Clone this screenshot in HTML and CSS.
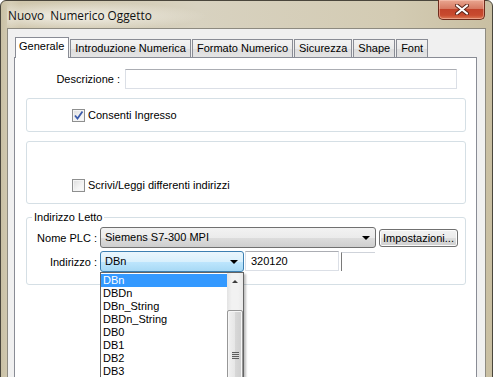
FILE: index.html
```html
<!DOCTYPE html>
<html lang="it">
<head>
  <meta charset="UTF-8" />
  <title>Nuovo Numerico Oggetto</title>
  <link rel="stylesheet" href="styles.css">
</head>
<body>
  <div class="window">
    <div class="titlebar">
      <span class="title">Nuovo&nbsp; Numerico Oggetto</span>
      <button class="close-btn" type="button">
        <svg width="14" height="11" viewBox="0 0 14 11">
          <path d="M2 1.5 L12 9.5 M12 1.5 L2 9.5" stroke="#5a2418" stroke-width="4" stroke-linecap="round"/>
          <path d="M2 1.5 L12 9.5 M12 1.5 L2 9.5" stroke="#fff" stroke-width="2.2" stroke-linecap="round"/>
        </svg>
      </button>
    </div>

    <div class="client">
      <div class="tabs">
        <div class="tab active">Generale</div>
        <div class="tab">Introduzione Numerica</div>
        <div class="tab">Formato Numerico</div>
        <div class="tab">Sicurezza</div>
        <div class="tab">Shape</div>
        <div class="tab">Font</div>
      </div>

      <div class="panel">
        <div class="desc-row">
          <span class="lbl desc-lbl">Descrizione :</span>
          <div class="textbox desc-box"></div>
        </div>

        <div class="group group-one">
          <div class="check">
            <span class="checkbox">
              <svg width="11" height="11" viewBox="0 0 11 11">
                <path d="M2 5.5 L4.5 8.5 L9.5 1.5" fill="none" stroke="#3b5bab" stroke-width="1.8"/>
              </svg>
            </span>
            Consenti Ingresso
          </div>
        </div>

        <div class="group group-two">
          <div class="check">
            <span class="checkbox"></span>
            Scrivi/Leggi differenti indirizzi
          </div>
        </div>

        <fieldset class="group group-three">
          <legend>Indirizzo Letto</legend>
          <div class="field-row">
            <span class="lbl field-lbl">Nome PLC :</span>
            <div class="combo plc-combo">Siemens S7-300 MPI<span class="arrow"></span></div>
            <button class="btn" type="button">Impostazioni...</button>
          </div>
          <div class="field-row">
            <span class="lbl field-lbl">Indirizzo :</span>
            <div class="combo-wrap">
              <div class="combo addr-combo hot">DBn<span class="arrow"></span></div>
              <div class="droplist">
                <ul class="items">
                  <li class="selected">DBn</li>
                  <li>DBDn</li>
                  <li>DBn_String</li>
                  <li>DBDn_String</li>
                  <li>DB0</li>
                  <li>DB1</li>
                  <li>DB2</li>
                  <li>DB3</li>
                </ul>
                <div class="scrollbar">
                  <div class="scroll-up"><span class="up-arrow"></span></div>
                  <div class="thumb">
                    <span class="grip"></span>
                  </div>
                </div>
              </div>
            </div>
            <div class="textbox num-box">320120</div>
            <div class="stub-box"></div>
          </div>
        </fieldset>
      </div>
    </div>
  </div>
</body>
</html>
```

FILE: styles.css
```css
* {
  box-sizing: border-box;
}

body {
  margin: 0;
  width: 493px;
  height: 377px;
  overflow: hidden;
  background: #fff;
  font-family: "Liberation Sans", Arial, sans-serif;
  font-size: 11px;
  color: #000;
}

.window {
  width: 493px;
  height: 420px;
  border: 1px solid #4a463c;
  border-radius: 6px 6px 0 0;
  padding: 0 6px;
  background: linear-gradient(to right, #c9c0a4, #d6ceb7 2%, #cfc6ac 4%, #d8d2c0 40%, #d3cbb3 80%, #c9bfa2);
  display: flex;
  flex-direction: column;
}

.titlebar {
  height: 27px;
  display: flex;
  align-items: flex-start;
  justify-content: space-between;
  background: radial-gradient(ellipse 130px 14px at 70px 15px, rgba(245, 243, 236, 0.9), rgba(245, 243, 236, 0));
}

.title {
  font-family: "Open Sans", "Liberation Sans", sans-serif;
  font-size: 11.8px;
  margin-top: 6px;
  margin-left: 1px;
  color: #111;
}

.close-btn {
  width: 47px;
  height: 20px;
  margin-top: -1px;
  margin-right: 1px;
  border: 1px solid #6e2b1c;
  border-top: none;
  border-radius: 0 0 5px 5px;
  background: linear-gradient(#e9a690, #d77a62 45%, #c2432a 50%, #c84a2e 80%, #dc7a55);
  box-shadow: inset 0 0 0 1px rgba(255, 210, 195, 0.45);
  display: flex;
  align-items: center;
  justify-content: center;
  padding: 0;
}

.client {
  flex: 1;
  border: 1px solid #8d8a80;
  border-bottom: none;
  background: #f0f0f0;
  padding: 8px 8px 0 6px;
  display: flex;
  flex-direction: column;
}

.tabs {
  display: flex;
  align-items: flex-end;
  height: 20px;
  padding-left: 1px;
  position: relative;
  z-index: 1;
}

.tab {
  height: 18px;
  line-height: 17px;
  padding: 0 4px;
  border: 1px solid #898c95;
  border-bottom: none;
  margin-right: 1px;
  background: linear-gradient(#f3f3f3, #ebebeb 50%, #dddddd 51%, #e4e4e4);
  white-space: nowrap;
}

.tab.active {
  height: 21px;
  margin-bottom: -1px;
  line-height: 17px;
  padding: 0 4px 0 3px;
  background: #fff;
}

.panel {
  flex: 1;
  background: #fff;
  border: 1px solid #898c95;
  border-bottom: none;
  padding-top: 11px;
}

.lbl {
  text-align: right;
  white-space: nowrap;
}

.desc-row {
  display: flex;
  align-items: center;
}

.desc-lbl {
  width: 105px;
  margin-right: 5px;
}

.textbox {
  height: 20px;
  border: 1px solid #dbdfe6;
  border-top-color: #abadb3;
  background: #fff;
  padding: 0 5px;
  line-height: 18px;
}

.desc-box {
  width: 332px;
}

.group {
  margin: 9px 10px 0 11px;
  border: 1px solid #d5dfe5;
  border-radius: 3px;
}

.group-one {
  height: 34px;
  padding: 10px 0 0 45px;
}

.group-two {
  height: 63px;
  margin-top: 9px;
  padding: 37px 0 0 45px;
}

.check {
  display: flex;
  align-items: center;
  gap: 3px;
  line-height: 13px;
}

.checkbox {
  width: 13px;
  height: 13px;
  border: 1px solid #8e8f8f;
  background: linear-gradient(135deg, #dcdcdc, #f4f4f4 60%, #fbfbfb);
  box-shadow: inset 0 0 0 1px #f4f4f4;
  display: flex;
  align-items: center;
  justify-content: center;
}

.group-three {
  margin-top: 7px;
  padding: 3px 0 12px 5px;
  min-width: 0;
}

.group-three legend {
  padding: 0 2px;
  line-height: 13px;
}

.field-row {
  display: flex;
  align-items: center;
  margin-bottom: 3px;
}

.field-row:last-child {
  margin-bottom: 0;
}

.field-lbl {
  width: 65px;
  margin-right: 3px;
}

.combo {
  position: relative;
  height: 21px;
  line-height: 19px;
  padding-left: 4px;
  border: 1px solid #707070;
  border-radius: 3px;
  background: linear-gradient(#f2f2f2, #ebebeb 50%, #dddddd 51%, #cfcfcf);
  white-space: nowrap;
}

.plc-combo {
  width: 276px;
}

.combo-wrap {
  position: relative;
}

.addr-combo {
  width: 144px;
}

.combo.hot {
  border-color: #3c7fb1;
  background: linear-gradient(#eaf6fd, #d9f0fc 50%, #bee6fd 51%, #a7d9f5);
}

.arrow {
  position: absolute;
  right: 5px;
  top: 8px;
  border-left: 4px solid transparent;
  border-right: 4px solid transparent;
  border-top: 4px solid #000;
}

.btn {
  height: 18px;
  width: 79px;
  margin-left: 3px;
  padding: 0;
  border: 1px solid #707070;
  border-radius: 3px;
  background: linear-gradient(#f2f2f2, #ebebeb 50%, #dddddd 51%, #cfcfcf);
  font-family: inherit;
  font-size: 11px;
  color: #000;
  box-shadow: inset 0 0 0 1px #fcfcfc;
}

.num-box {
  width: 94px;
  margin-left: 1px;
  margin-top: -1px;
  padding-left: 5px;
}

.stub-box {
  width: 34px;
  height: 19px;
  margin-left: 2px;
  border-top: 1px solid #cfd3da;
  border-left: 1px solid #7a7a7a;
}

.droplist {
  position: absolute;
  top: 100%;
  left: 0;
  width: 144px;
  height: 140px;
  border: 1px solid #646464;
  background: #fff;
  display: flex;
  box-shadow: 2px 2px 2px rgba(0, 0, 0, 0.25);
  z-index: 2;
}

.items {
  list-style: none;
  margin: 0;
  padding: 1px 0 0;
  flex: 1;
}

.items li {
  height: 13px;
  line-height: 13px;
  padding-left: 2px;
}

.items li.selected {
  background: #3399ff;
  color: #fff;
}

.scrollbar {
  width: 16px;
  background: linear-gradient(to right, #e3e3e3, #f2f2f2 30%, #f2f2f2 70%, #e8e8e8);
  display: flex;
  flex-direction: column;
}

.scroll-up {
  height: 17px;
  display: flex;
  justify-content: center;
  padding-top: 7px;
}

.up-arrow {
  border-left: 3px solid transparent;
  border-right: 3px solid transparent;
  border-bottom: 3px solid #3d3d3d;
  height: 0;
}

.thumb {
  margin-top: 20px;
  height: 90px;
  border: 1px solid #979797;
  border-radius: 2px;
  background: linear-gradient(to right, #f1f1f1, #e6e6e6 50%, #d8d8d8 51%, #cecece);
  box-shadow: inset 0 0 0 1px #f6f6f6;
  display: flex;
  justify-content: center;
  padding-top: 41px;
}

.grip {
  width: 7px;
  height: 7px;
  background: repeating-linear-gradient(#5e5e5e 0, #5e5e5e 1px, #dcdcdc 1px, #dcdcdc 2px);
}
```
